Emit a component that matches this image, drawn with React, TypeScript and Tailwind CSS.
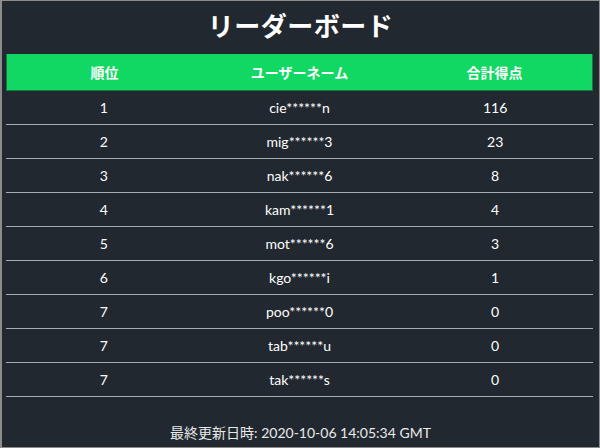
import React from 'react';

interface Entry {
  rank: number;
  name: string;
  score: number;
}

const entries: Entry[] = [
  { rank: 1, name: 'cie******n', score: 116 },
  { rank: 2, name: 'mig******3', score: 23 },
  { rank: 3, name: 'nak******6', score: 8 },
  { rank: 4, name: 'kam******1', score: 4 },
  { rank: 5, name: 'mot******6', score: 3 },
  { rank: 6, name: 'kgo******i', score: 1 },
  { rank: 7, name: 'poo******0', score: 0 },
  { rank: 7, name: 'tab******u', score: 0 },
  { rank: 7, name: 'tak******s', score: 0 },
];

const font = "font-['Lato','Noto_Sans_CJK_JP',sans-serif]";

const App = () => {
  return (
    <div
      className={`flex h-[448px] w-[600px] flex-col border border-l-2 border-[#8c8c8c] bg-[#22282f] text-white ${font}`}
    >
      <h1 className="flex h-[53px] items-center justify-center pb-[3px] text-[26px] font-bold tracking-[0.5px]">
        リーダーボード
      </h1>
      <div className="mx-[4px] mr-[6px]">
        <div className="grid h-[37px] grid-cols-3 items-center border-x border-b border-[#157a3f] bg-[#10d863] text-[14px] font-bold">
          <div className="text-center">順位</div>
          <div className="text-center">ユーザーネーム</div>
          <div className="text-center">合計得点</div>
        </div>
        {entries.map((e, i) => (
          <div
            key={i}
            className="grid h-[34px] grid-cols-3 items-center border-b border-[#a4acb4] text-[14px]"
          >
            <div className="text-center">{e.rank}</div>
            <div className="text-center">{e.name}</div>
            <div className="text-center">{e.score}</div>
          </div>
        ))}
      </div>
      <div className="mt-auto pb-[4px] text-center text-[14px] text-[#e8eaec]">
        最終更新日時: 2020-10-06 14:05:34 GMT
      </div>
    </div>
  );
};

export default App;
